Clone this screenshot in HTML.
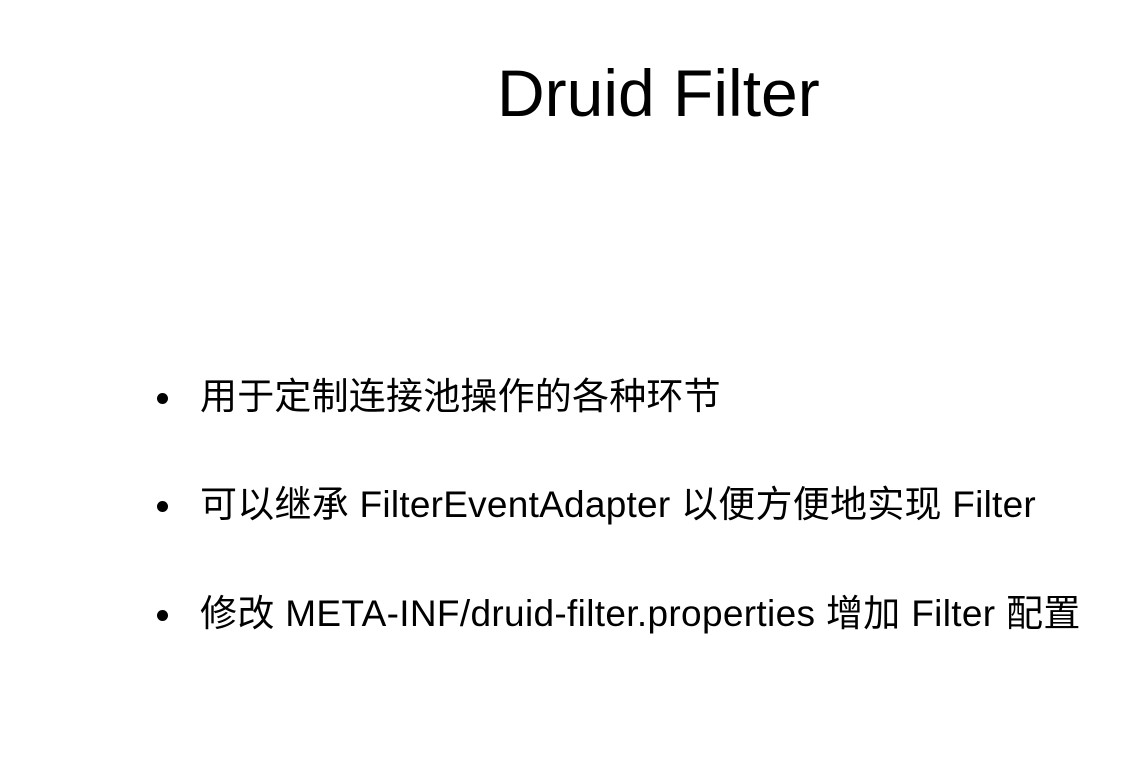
<!DOCTYPE html>
<html><head><meta charset="utf-8"><style>
html,body{margin:0;padding:0;background:#fff;width:1129px;height:762px;overflow:hidden}
body{position:relative;font-family:"Liberation Sans","Noto Sans CJK SC",sans-serif;color:#000}
h1{position:absolute;left:497px;top:55px;margin:0;font-weight:normal;font-size:66px;line-height:76px;letter-spacing:0}
.b{position:absolute;left:200px;font-size:37px;line-height:42px;white-space:nowrap;letter-spacing:0.2px}
.b:before{content:"";position:absolute;left:-43px;top:17px;width:11px;height:11px;border-radius:50%;background:#000}
</style></head><body>
<h1>Druid Filter</h1>
<div class="b" style="top:376px">用于定制连接池操作的各种环节</div>
<div class="b" style="top:484px;letter-spacing:0.25px">可以继承 FilterEventAdapter 以便方便地实现 Filter</div>
<div class="b" style="top:593px;letter-spacing:0.33px">修改 META-INF/druid-filter.properties 增加 Filter 配置</div>
</body></html>
